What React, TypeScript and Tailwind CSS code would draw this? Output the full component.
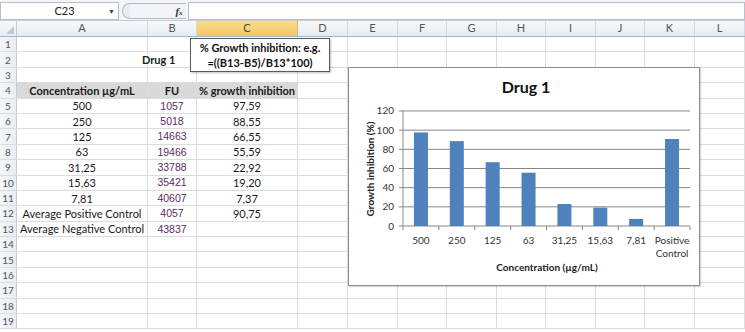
const COLS = [
    { key: 'A', w: 'w-[131px]' },
    { key: 'B', w: 'w-[49px]' },
    { key: 'C', w: 'w-[101px]' },
    { key: 'D', w: 'w-[50px]' },
    { key: 'E', w: 'w-[50px]' },
    { key: 'F', w: 'w-[49px]' },
    { key: 'G', w: 'w-[50px]' },
    { key: 'H', w: 'w-[49px]' },
    { key: 'I', w: 'w-[50px]' },
    { key: 'J', w: 'w-[49px]' },
    { key: 'K', w: 'w-[50px]' },
    { key: 'L', w: 'w-[50px]' },
];

type Row = { a?: string; b?: string; c?: string };

const DATA: Record<number, Row> = {
    5: { a: '500', b: '1057', c: '97,59' },
    6: { a: '250', b: '5018', c: '88,55' },
    7: { a: '125', b: '14663', c: '66,55' },
    8: { a: '63', b: '19466', c: '55,59' },
    9: { a: '31,25', b: '33788', c: '22,92' },
    10: { a: '15,63', b: '35421', c: '19,20' },
    11: { a: '7,81', b: '40607', c: '7,37' },
    12: { a: 'Average Positive Control', b: '4057', c: '90,75' },
    13: { a: 'Average Negative Control', b: '43837' },
};

const BARS = [
    { label: '500', v: 97.59 },
    { label: '250', v: 88.55 },
    { label: '125', v: 66.55 },
    { label: '63', v: 55.59 },
    { label: '31,25', v: 22.92 },
    { label: '15,63', v: 19.2 },
    { label: '7,81', v: 7.37 },
    { label: 'Positive', v: 90.75 },
];

function FormulaBar() {
    return (
        <div className="flex h-[21px] items-stretch border-b border-[#c5cbd3] bg-[#f3f5f8] pt-[2px]">
            <div className="flex w-[119px] items-center border border-[#b9c0ca] bg-white">
                <span className="flex-1 pl-[20px] text-center text-[11px] text-[#222]">C23</span>
                <span className="mr-[3px] text-[7px] text-[#444]">▼</span>
            </div>
            <div className="ml-[3px] mr-[2px] flex w-[64px] items-center">
                <div className="h-[16px] w-[8px] rounded-l-full border border-r-0 border-[#b3bac4] bg-[#e9edf2]" />
                <div className="h-[16px] flex-1 border-y border-[#b3bac4] bg-[#f2f4f7]" />
                <span className="flex h-[16px] w-[14px] items-center justify-center border-y border-[#b3bac4] bg-[#f2f4f7] font-['Liberation_Serif'] text-[11px] font-bold italic text-[#333]">
                    f<sub className="text-[7px]">x</sub>
                </span>
            </div>
            <div className="flex-1 border border-[#b9c0ca] bg-white" />
        </div>
    );
}

function HeaderRow() {
    return (
        <div className="flex h-[16px] border-b border-[#9eb6ce] bg-gradient-to-b from-[#f7f9fb] to-[#e6ebf1]">
            <div className="relative w-[17px] shrink-0 border-r border-[#c1ccd9]">
                <div className="absolute bottom-[2px] right-[2px] h-0 w-0 border-b-[8px] border-l-[8px] border-b-[#c2c8d0] border-l-transparent" />
            </div>
            {COLS.map((c) => (
                <div
                    key={c.key}
                    className={`${c.w} shrink-0 flex items-center justify-center border-r text-[11px] ${
                        c.key === 'C'
                            ? 'border-[#e0b35c] bg-gradient-to-b from-[#f9dc8e] to-[#f4c65f] text-[#444]'
                            : 'border-[#d3d9e1] text-[#555]'
                    }`}
                >
                    {c.key}
                </div>
            ))}
        </div>
    );
}

function Cell({ w, children, cls = '' }: { w: string; children?: React.ReactNode; cls?: string }) {
    return (
        <div className={`${w} shrink-0 flex items-center justify-center border-r border-[#dadcdd] ${cls}`}>
            {children}
        </div>
    );
}

function GridRow({ n }: { n: number }) {
    const d = DATA[n] || {};
    const head = n === 4;
    return (
        <div className="flex h-[15.4px] border-b border-[#dadcdd] text-[11px] leading-none text-[#1a1a1a]">
            <div className="flex w-[17px] shrink-0 items-center justify-center border-r border-[#c1ccd9] bg-gradient-to-r from-[#f4f6f9] to-[#e9edf2] text-[10px] text-[#555]">
                {n}
            </div>
            {COLS.map((c) => {
                if (c.key === 'A')
                    return (
                        <Cell key="A" w={c.w} cls={head ? 'bg-[#d9d9d9] font-bold' : ''}>
                            {head ? 'Concentration µg/mL' : d.a}
                        </Cell>
                    );
                if (c.key === 'B')
                    return (
                        <Cell
                            key="B"
                            w={c.w}
                            cls={
                                head
                                    ? 'bg-[#d9d9d9] font-bold'
                                    : n === 2
                                      ? 'justify-start overflow-visible'
                                      : "font-['Liberation_Sans'] text-[10.5px] text-[#5a2c63]"
                            }
                        >
                            {head ? (
                                'FU'
                            ) : n === 2 ? (
                                <span className="relative -ml-[6px] bg-white font-bold">Drug 1</span>
                            ) : (
                                d.b
                            )}
                        </Cell>
                    );
                if (c.key === 'C')
                    return (
                        <Cell key="C" w={c.w} cls={head ? 'bg-[#d9d9d9] font-bold' : ''}>
                            {head ? '% growth inhibition' : d.c}
                        </Cell>
                    );
                return <Cell key={c.key} w={c.w} />;
            })}
        </div>
    );
}

function Chart() {
    const x0 = 54;
    const x1 = 341;
    const yZero = 158;
    const step = 19.17;
    const cw = (x1 - x0) / 8;
    const yOf = (v: number) => yZero - (v / 20) * step;
    return (
        <div className="absolute left-[348px] top-[67px] h-[219px] w-[352px] border border-[#8c8c8c] bg-white shadow-[1px_1px_1px_rgba(0,0,0,0.15)]">
            <svg width="352" height="219" className="font-['Lato']">
                <text x="177" y="25" textAnchor="middle" fontSize="16" fontWeight="700" fill="#111">
                    Drug 1
                </text>
                {[0, 20, 40, 60, 80, 100, 120].map((v) => (
                    <g key={v}>
                        <line x1={x0 - 4} x2={x1} y1={yOf(v)} y2={yOf(v)} stroke="#868686" strokeWidth="1" />
                        <text x={x0 - 9} y={yOf(v) + 3.5} textAnchor="end" fontSize="10" fill="#333">
                            {v}
                        </text>
                    </g>
                ))}
                <line x1={x0} x2={x0} y1={yOf(120)} y2={yZero} stroke="#868686" />
                {BARS.map((b, i) => {
                    const cx = x0 + cw * i + cw / 2;
                    return (
                        <g key={b.label}>
                            <rect x={cx - 7} y={yOf(b.v)} width="14" height={yZero - yOf(b.v)} fill="#4f81bd" />
                            <text x={cx} y={176} textAnchor="middle" fontSize="10" fill="#333">
                                {b.label}
                            </text>
                        </g>
                    );
                })}
                <text x={x0 + cw * 7.5} y={189} textAnchor="middle" fontSize="10" fill="#333">
                    Control
                </text>
                {Array.from({ length: 9 }).map((_, i) => (
                    <line
                        key={i}
                        x1={x0 + cw * i}
                        x2={x0 + cw * i}
                        y1={yZero}
                        y2={yZero + 4}
                        stroke="#868686"
                    />
                ))}
                <text x="198" y="203" textAnchor="middle" fontSize="10" fontWeight="700" fill="#222">
                    Concentration (µg/mL)
                </text>
                <text
                    x="0"
                    y="0"
                    transform="translate(25 101) rotate(-90)"
                    textAnchor="middle"
                    fontSize="10"
                    fontWeight="700"
                    fill="#222"
                >
                    Growth inhibition  (%)
                </text>
            </svg>
        </div>
    );
}

export default function App() {
    return (
        <div className="relative h-[332px] w-[745px] overflow-hidden bg-white font-['Lato',sans-serif]">
            <FormulaBar />
            <HeaderRow />
            {Array.from({ length: 19 }).map((_, i) => (
                <GridRow key={i} n={i + 1} />
            ))}
            <div className="absolute left-[190px] top-[38px] flex h-[34px] w-[140px] flex-col items-center justify-center border border-[#5a5a5a] bg-white text-[11px] font-bold leading-[15px] text-[#111] shadow-[1px_1px_2px_rgba(0,0,0,0.25)]">
                <span>% Growth inhibition: e.g.</span>
                <span>=((B13-B5)/B13*100)</span>
            </div>
            <Chart />
        </div>
    );
}
